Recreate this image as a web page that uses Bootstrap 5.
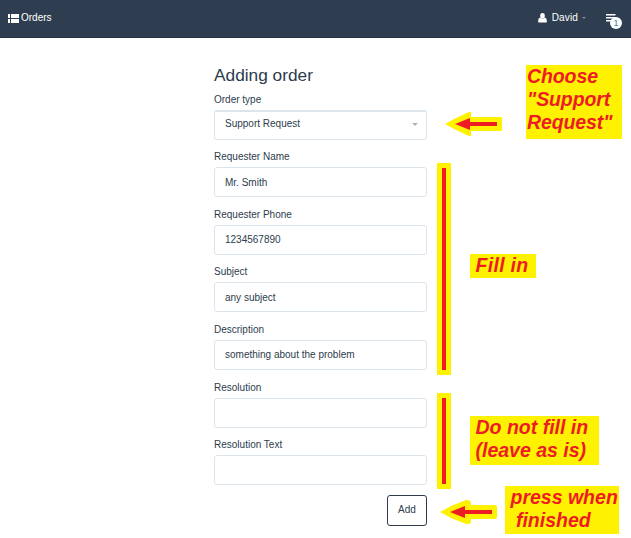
<!DOCTYPE html>
<html lang="en">
<head>
<meta charset="utf-8">
<meta name="viewport" content="width=device-width, initial-scale=1">
<title>Adding order</title>
<link href="https://cdn.jsdelivr.net/npm/bootstrap@5.3.0/dist/css/bootstrap.min.css" rel="stylesheet">
<style>
body { font: 10px/14px "Liberation Sans", Arial, sans-serif; color: #2d3c4d; width: 631px; height: 538px; overflow: hidden; }
.topbar { height: 38px; background: #2e3e50; border-bottom: 1px solid #263545; padding: 0 9px 1px 8px; }
.topbar a { font-size: 10px; line-height: 14px; }
.orders-label { margin-left: 2px; }
.caret-sm { width: 0; border: 2.5px solid transparent; border-top-color: #7d8a98; border-bottom: 0; margin-left: 4px; }
.menu-link { width: 16px; height: 9px; margin-left: 20px; }
.user-label { margin-left: 4.5px; letter-spacing: .15px; }
.count { left: 4px; top: 3px; width: 12px; height: 12px; font-size: 9px; line-height: 12px; color: #3f7fae; }
.order-form { width: 213px; margin-left: 214px; padding-top: 26px; }
.order-form h1 { font-size: 17.3px; line-height: 22px; margin: 0 0 6.6px; color: #2d3c4d; }
.field { height: 57.6px; }
.field label { display: block; height: 17px; line-height: 13px; }
.field .form-control, .field .form-select { height: 30px; border: 1px solid #dce4ec; border-radius: 3px; font-size: 10px; line-height: 14px; padding: 7px 10px; color: #2d3c4d; box-shadow: none; }
.field .form-select { background-image: none; border-top-width: 2px; padding-top: 5px; }
.select-caret { right: 9px; top: 13px; border: 3px solid transparent; border-top-color: #a9b4c0; border-bottom: 0; }
.btn-add { width: 40px; height: 31px; padding: 0 0 2px; font-size: 10px; color: #2d3c4d; border: 1px solid #2d3c4d; border-radius: 3px; margin-top: -.6px; }
.callout { position: absolute; background: #fff200; color: #ed1c24; font: italic bold 19.5px/23px "Liberation Sans", Arial, sans-serif; white-space: pre; }
.c-choose { left: 526px; top: 65px; width: 96px; height: 74px; padding-left: 1px; letter-spacing: -.1px; }
.c-fill { left: 470px; top: 254px; width: 66px; height: 24px; padding-left: 5.5px; letter-spacing: .3px; }
.c-leave { left: 470px; top: 416px; width: 129px; height: 49px; padding-left: 5.5px; }
.c-press { left: 505px; top: 486px; width: 114px; height: 48px; padding-left: 5.5px; }
.range { position: absolute; left: 437px; width: 14px; background: #ed1c24; border: solid #fff200; border-width: 5px; }
.range-fill { top: 163px; height: 212px; }
.range-leave { top: 393px; height: 96px; }
.pointer { position: absolute; width: 58px; height: 25px; }
.p-choose { left: 445px; top: 112px; }
.p-press { left: 440px; top: 500px; }
</style>
</head>
<body class="position-relative bg-white">
<nav class="topbar d-flex align-items-center justify-content-between">
  <a href="#" class="d-flex align-items-center text-white text-decoration-none">
    <svg width="11" height="9" viewBox="0 0 11 9" fill="#fff"><path d="M0 0h2v4H0zM3 0h8v4H3zM0 5h2v4H0zM3 5h8v4H3z"/></svg>
    <span class="orders-label">Orders</span>
  </a>
  <div class="d-flex align-items-center">
    <a href="#" class="d-flex align-items-center text-white text-decoration-none">
      <svg width="9" height="10" viewBox="0 0 9 10" fill="#fff"><ellipse cx="4.5" cy="2.9" rx="2.3" ry="2.8"/><path d="M2 4.6Q4.5 7.4 7 4.6Q9 5.2 8.9 8.4Q8.8 9.6 7.5 9.6H1.5Q.2 9.6.1 8.4Q0 5.2 2 4.6Z"/></svg>
      <span class="user-label">David</span><span class="caret-sm"></span>
    </a>
    <a href="#" class="menu-link position-relative d-block">
      <svg class="d-block" width="10" height="9" viewBox="0 0 10 9" fill="#fff"><path d="M0 0h9.5v1.6H0zM0 3h9.5v1.6H0zM0 6h9.5v1.6H0z"/></svg>
      <span class="count position-absolute bg-white rounded-circle text-center">1</span>
    </a>
  </div>
</nav>
<form class="order-form">
  <h1 class="fw-normal">Adding order</h1>
  <div class="field"><label for="type">Order type</label>
    <div class="position-relative"><select id="type" class="form-select"><option>Support Request</option></select><span class="select-caret position-absolute"></span></div></div>
  <div class="field"><label for="name">Requester Name</label><input id="name" class="form-control" value="Mr. Smith"></div>
  <div class="field"><label for="phone">Requester Phone</label><input id="phone" class="form-control" value="1234567890"></div>
  <div class="field"><label for="subject">Subject</label><input id="subject" class="form-control" value="any subject"></div>
  <div class="field"><label for="description">Description</label><input id="description" class="form-control" value="something about the problem"></div>
  <div class="field"><label for="resolution">Resolution</label><input id="resolution" class="form-control"></div>
  <div class="field"><label for="restext">Resolution Text</label><input id="restext" class="form-control"></div>
  <div class="d-flex justify-content-end"><button type="button" class="btn btn-add">Add</button></div>
</form>

<svg class="pointer p-choose" viewBox="0 0 58 25"><path d="M0 12L11 6L24 0H26V5H56L57 6V18L56 19H26V24H24L11 18Z" fill="#fff200"/><path d="M10 12L25 6V10H52V14H25V18Z" fill="#ed1c24"/></svg>
<div class="callout c-choose">Choose
"Support
Request"</div>
<div class="range range-fill"></div>
<div class="callout c-fill">Fill in</div>
<div class="range range-leave"></div>
<div class="callout c-leave">Do not fill in
(leave as is)</div>
<svg class="pointer p-press" viewBox="0 0 58 25"><path d="M0 12L11 6L26 0Q31 0 31 3V5H55Q57 5 57 7V17Q57 19 55 19H31V22Q31 24 26 24L11 18Z" fill="#fff200"/><path d="M10 12L25 6V10H52V14H25V18Z" fill="#ed1c24"/></svg>
<div class="callout c-press">press when
 finished</div>
<script src="https://cdn.jsdelivr.net/npm/bootstrap@5.3.0/dist/js/bootstrap.bundle.min.js"></script>
</body>
</html>
